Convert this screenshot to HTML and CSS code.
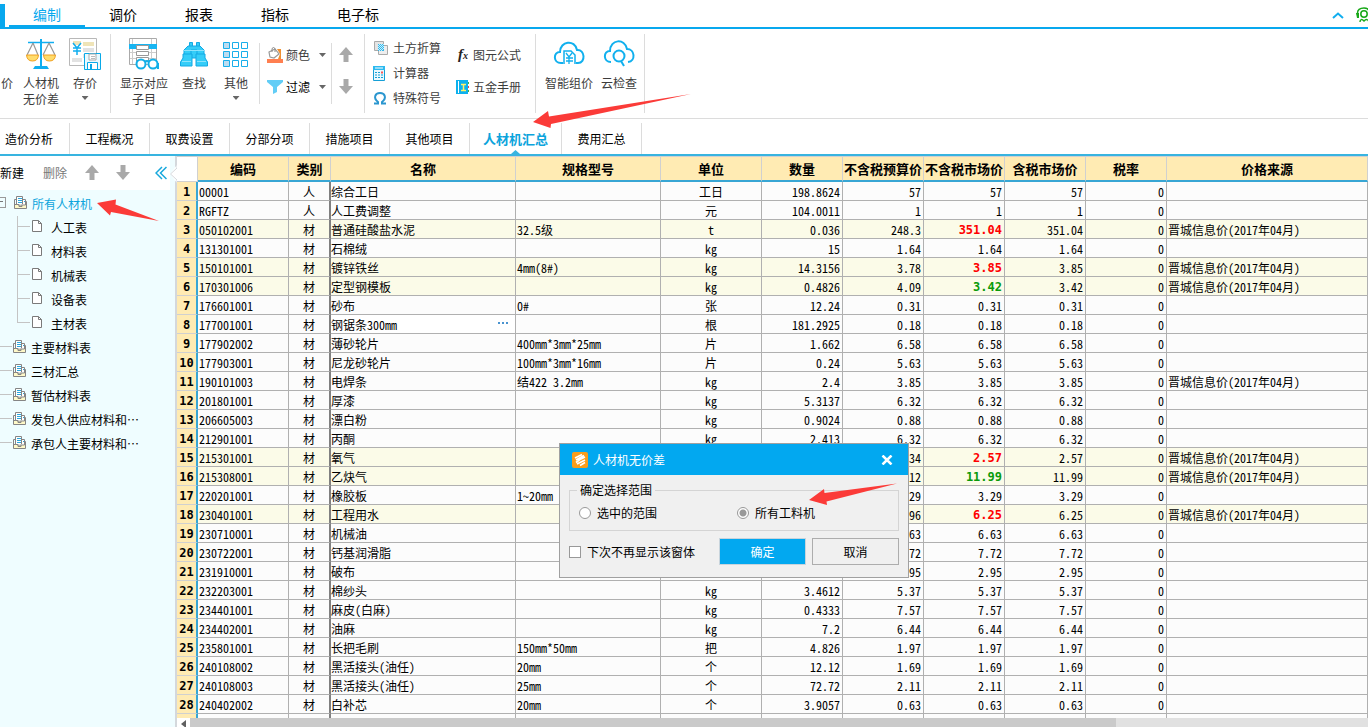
FILE: index.html
```html
<!DOCTYPE html>
<html lang="zh-CN">
<head>
<meta charset="utf-8">
<title>人材机汇总</title>
<link rel="stylesheet" href="styles.css">
</head>
<body>
<svg class="defs" width="0" height="0" aria-hidden="true">
  <symbol id="i-folder" viewBox="0 0 13 13"><path d="M.500 8.500H12.500V12.500H.500z" fill="#fff9c8" stroke="#858585"/><path d="M4.500 3.500H11.500V9H4.500z" fill="#fff" stroke="#858585"/><path d="M2.500 .500H8.500V8.500H2.500z" fill="#fff"/><path d="M.500 12V3.500H2.500V.500H8.500V8M2.500 3V8.500H5V10.500H8V8.500M11.500 5.500H12.500V12" fill="none" stroke="#858585"/><path d="M4 2.500H8M4 4.500H8M4 6.500H8M10 5.500H11" stroke="#2ba7dd"/></symbol>
  <symbol id="i-page" viewBox="0 0 11 13"><path d="M.500 .500H6.500L9.500 3.500V11.500H.500z" fill="#fff" stroke="#7a7a7a"/><path d="M6.500 .500V3.500H9.500" fill="none" stroke="#7a7a7a"/></symbol>
  <symbol id="i-up" viewBox="0 0 14 16"><path d="M7 0L14 8H9.500V15H4.500V8H0z" fill="#a9a9a9"/></symbol>
  <symbol id="i-down" viewBox="0 0 14 16"><path d="M7 15L0 7H4.500V0H9.500V7H14z" fill="#a9a9a9"/></symbol>
</svg>

<nav class="menu">
  <span class="menu-app"></span>
  <button class="menu-tab on">编制</button><button class="menu-tab">调价</button><button class="menu-tab">报表</button><button class="menu-tab">指标</button><button class="menu-tab wide">电子标</button>
  <span class="menu-right">
    <button class="bare" aria-label="收起"><svg width="12" height="7" viewBox="0 0 12 7"><path d="M1 6L6 1.500L11 6" fill="none" stroke="#12aeef" stroke-width="2"/></svg></button>
    <button class="bare" aria-label="客服"><svg width="12" height="16" viewBox="0 0 12 16"><g fill="none" stroke="#18a818" stroke-width="1.500"><path d="M2 9C0 2 5 1 8 1S13 2 13 5"/><circle cx="8" cy="7" r="3.200"/><path d="M4 15C4 12 6 12 8 14C10 12 12 12 13 15"/></g><path d="M0 6H3V11H1z" fill="#18a818"/></svg></button>
  </span>
</nav>

<header class="ribbon">
  <button class="tool cut"><span>价</span></button>
  <button class="tool"><svg width="32" height="32" viewBox="0 0 32 32"><path d="M3 4.500H29" stroke="#10aef0" stroke-width="1.500"/><path d="M16 1V28" stroke="#10aef0" stroke-width="2"/><path d="M10 28H22L24 31H8z" fill="#10aef0"/><path d="M8 5L2 17M8 5L13 17M24 5L18 17M24 5L30 17" fill="none" stroke="#999" stroke-width="1.200"/><path d="M1.500 17H13.500Q13 23 7.500 23T1.500 17M18.500 17H30.500Q30 23 24.500 23T18.500 17" fill="#ffdc6c" stroke="#f0a020"/></svg><span>人材机<br>无价差</span></button>
  <button class="tool"><svg width="32" height="32" viewBox="0 0 32 32"><path d="M.500 .500H27.500V27.500H.500z" fill="#fff" stroke="#b8b8b8"/><path d="M14 4H25V8H14M4 3H12V7H4" fill="#efe4b8"/><path d="M14 10H25V14H14M14 16H25V20H14M3 20H13V24H3" fill="#e2e2e2"/><path d="M4 5L8 10L12 5M4 10H12M4 13H12M8 10V17" fill="none" stroke="#10aef0" stroke-width="1.500"/><path d="M15.500 15.500H31.500V31.500H15.500z" fill="#e8f9ff" stroke="#08a9e8"/><path d="M18.500 31V24.500H28.500V31" fill="#fff" stroke="#08a9e8"/><path d="M22 26V31" stroke="#08a9e8" stroke-width="2"/><path d="M20 16H27V22H20z" fill="#fff" stroke="#aaa"/><path d="M22 18.500H26M22 20.500H26" stroke="#bbb"/></svg><span>存价</span><i class="caret"></i></button>
  <hr class="sep">
  <button class="tool large"><svg width="30" height="32" viewBox="0 0 30 32"><path d="M.500 .500H27.500V26.500H.500z" fill="#fff" stroke="#aaa"/><path d="M3.500 1V26M1 14.500H27M1 20.500H27M22.500 1V26" stroke="#ccc"/><path d="M0 6H28V11H0z" fill="#18b5f2"/><path d="M7.500 7.500H19.500V11.500H7.500zM7.500 13.500H19.500V17.500H7.500zM7.500 19.500H19.500V23H7.500z" fill="#fff" stroke="#999"/><g fill="#fff" stroke="#11afe8" stroke-width="2"><circle cx="12" cy="26" r="4.500"/><circle cx="24" cy="26" r="4.500"/><path d="M16 24Q18 22 20 24M29 25V31"/></g></svg><span>显示对应<br>子目</span></button>
  <button class="tool"><svg width="28" height="32" viewBox="0 0 28 32"><g fill="#35cdf8" stroke="#12a9e4"><path d="M9.500 4.500H12.500V9H9.500zM16.500 4.500H19.500V9H16.500z"/><path d="M4 12L8 8H20L24 12V17H4z"/><path d="M11 12H17V20H11z"/><path d="M3 16H12V28H.500V24L3 20zM16 16H25V20L27.500 24V28H16z"/></g><path d="M4 12.500H24M2 23.500H11M17 23.500H26" stroke="#8ce4fc"/></svg><span>查找</span></button>
  <button class="tool slim"><svg width="26" height="32" viewBox="0 0 26 32"><path d="M.500 4.500h6v6h-6zM.500 13.500h6v6h-6zM.500 22.500h6v6h-6z" fill="#bcdcf0" stroke="#18aeea"/><path d="M9.500 4.500h6v6h-6zM18.500 4.500h6v6h-6zM9.500 13.500h6v6h-6zM18.500 13.500h6v6h-6zM9.500 22.500h6v6h-6zM18.500 22.500h6v6h-6z" fill="#fff" stroke="#18aeea"/></svg><span>其他</span><i class="caret"></i></button>
  <hr class="sep short">
  <div class="stack two fmt">
    <button class="row-tool"><svg width="16" height="16" viewBox="0 0 16 16"><path d="M10 2H14V12H11L13 7z" fill="#f09030"/><path d="M2 5L8 2L12 7L7 11L3 10z" fill="#fff" stroke="#999" stroke-width="1.200"/><path d="M5 5V1.500Q6.500 -.500 8 1.500V5" fill="none" stroke="#888"/><path d="M0 12H16V16H0z" fill="#ff7f50"/></svg><span>颜色</span><i class="caret"></i></button>
    <button class="row-tool dark"><svg width="16" height="16" viewBox="0 0 16 16"><path d="M0 1H16V3L10 8V13L6 15V8L0 3z" fill="#62cdf6"/></svg><span>过滤</span><i class="caret"></i></button>
  </div>
  <hr class="sep short">
  <div class="stack two moves">
    <button class="bare" aria-label="上移"><svg width="14" height="16"><use href="#i-up"/></svg></button>
    <button class="bare" aria-label="下移"><svg width="14" height="16"><use href="#i-down"/></svg></button>
  </div>
  <hr class="sep">
  <div class="stack three">
    <button class="row-tool"><svg width="15" height="15" viewBox="0 0 15 15"><path d="M1.500 .500H10.500V9.500H1.500z" fill="#e4e4e4" stroke="#aaa"/><path d="M5.500 4.500H14.500V13.500H5.500z" fill="#eee" stroke="#aaa"/><path d="M5 3H11V10H5z" fill="#35b7e8"/><path d="M5 5L7 3M5 7L9 3M5 9L11 3M6 10L11 5M8 10L11 7" stroke="#c8f0ff"/></svg><span>土方折算</span></button>
    <button class="row-tool"><svg width="15" height="15" viewBox="0 0 15 15"><path d="M.500 .500H11.500V14.500H.500z" fill="#e9f9ff" stroke="#169fd6"/><path d="M0 0H12V4H0z" fill="#2cb9ef"/><path d="M2 2H10" stroke="#fff"/><path d="M2 6.500H4M5 6.500H7M2 9H4M5 9H7M2 11.500H4M5 11.500H7M8 9H10M8 11.500H10" stroke="#169fd6"/><path d="M8 6.500H10" stroke="#f55" stroke-width="2"/></svg><span>计算器</span></button>
    <button class="row-tool"><svg width="15" height="15" viewBox="0 0 15 15"><path d="M1 12.500H5V11C0 7 2 2 7 2S14 7 9 11V12.500H13" fill="none" stroke="#2a96cf" stroke-width="2"/></svg><span>特殊符号</span></button>
  </div>
  <div class="stack two">
    <button class="row-tool"><em class="fx">f<small>x</small></em><span>图元公式</span></button>
    <button class="row-tool"><svg width="14" height="14" viewBox="0 0 14 14"><path d="M0 0H12V14H0z" fill="#0cb1ee"/><path d="M2.500 1V13" stroke="#fff"/><path d="M5 4.500H10M5 10.500H10M7.500 4V11" stroke="#fff36a" stroke-width="1.500"/><path d="M12 2H13V4H12M12 10H13V12H12" fill="#37b24a"/><path d="M12 6H13V8H12" fill="#e44"/></svg><span>五金手册</span></button>
  </div>
  <hr class="sep">
  <button class="tool large"><svg width="32" height="32" viewBox="0 0 32 32"><g fill="none" stroke="#10b0ee" stroke-width="2"><path d="M10 25H8C0 25 0 14 7 14C7 3 22 1 24 12C32 11 33 25 25 25H23"/><path d="M11 26V13H18L22 17V26" stroke-width="1.500"/><path d="M13 15L16 19L19 15M16 19V26M13 20H20M13 23H20" stroke-width="1.300"/></g></svg><span>智能组价</span></button>
  <button class="tool"><svg width="32" height="32" viewBox="0 0 32 32"><g fill="none" stroke="#10b0ee" stroke-width="2"><path d="M8 24C0 24 0 13 7 13C7 1 22 0 24 11C32 11 33 23 25 24"/><circle cx="16" cy="18" r="5.500"/><path d="M18 23L21 28"/></g></svg><span>云检查</span></button>
  <hr class="sep">
</header>

<nav class="tabs">
  <button class="tab first">造价分析</button><button class="tab">工程概况</button><button class="tab">取费设置</button><button class="tab">分部分项</button><button class="tab">措施项目</button><button class="tab">其他项目</button><button class="tab on">人材机汇总</button><button class="tab">费用汇总</button>
</nav>

<div class="work">
  <aside class="side">
    <div class="side-bar">
      <button class="bare new">新建</button><button class="bare del">删除</button>
      <button class="bare" aria-label="上移"><svg width="14" height="16"><use href="#i-up"/></svg></button>
      <button class="bare" aria-label="下移"><svg width="14" height="16"><use href="#i-down"/></svg></button>
      <button class="bare fold" aria-label="折叠"><svg width="12" height="14" viewBox="0 0 12 14"><path d="M7 1L1 7L7 13M11.500 1L5.500 7L11.500 13" fill="none" stroke="#18a8dc" stroke-width="1.500"/></svg></button>
    </div>
    <ul class="tree">
      <li><a class="node on" href="#"><svg width="13" height="13"><use href="#i-folder"/></svg>所有人材机</a>
        <ul>
          <li><a class="node" href="#"><svg width="11" height="13"><use href="#i-page"/></svg>人工表</a></li>
          <li><a class="node" href="#"><svg width="11" height="13"><use href="#i-page"/></svg>材料表</a></li>
          <li><a class="node" href="#"><svg width="11" height="13"><use href="#i-page"/></svg>机械表</a></li>
          <li><a class="node" href="#"><svg width="11" height="13"><use href="#i-page"/></svg>设备表</a></li>
          <li><a class="node" href="#"><svg width="11" height="13"><use href="#i-page"/></svg>主材表</a></li>
        </ul>
      </li>
      <li><a class="node" href="#"><svg width="13" height="13"><use href="#i-folder"/></svg>主要材料表</a></li>
      <li><a class="node" href="#"><svg width="13" height="13"><use href="#i-folder"/></svg>三材汇总</a></li>
      <li><a class="node" href="#"><svg width="13" height="13"><use href="#i-folder"/></svg>暂估材料表</a></li>
      <li><a class="node" href="#"><svg width="13" height="13"><use href="#i-folder"/></svg>发包人供应材料和⋯</a></li>
      <li><a class="node" href="#"><svg width="13" height="13"><use href="#i-folder"/></svg>承包人主要材料和⋯</a></li>
    </ul>
    <svg class="notch" width="7" height="18" viewBox="0 0 7 18"><path d="M7 0L0 9L7 18z" fill="#fff"/><path d="M7 0V3L.500 9L7 15V18" fill="none" stroke="#d4d8dc"/></svg>
  </aside>

  <main class="grid-pane">
    <div class="grid-view">
    <table class="grid">
      <colgroup><col class="c-no"><col class="c-code"><col class="c-kind"><col class="c-name"><col class="c-spec"><col class="c-unit"><col class="c-num"><col class="c-num"><col class="c-num"><col class="c-num"><col class="c-num"><col></colgroup>
      <thead><tr><th></th><th>编码</th><th>类别</th><th>名称</th><th>规格型号</th><th>单位</th><th>数量</th><th>不含税预算价</th><th>不含税市场价</th><th>含税市场价</th><th>税率</th><th>价格来源</th></tr></thead>
      <tbody>
        <tr><th>1</th><td>00001</td><td>人</td><td>综合工日</td><td></td><td>工日</td><td>198.8624</td><td>57</td><td>57</td><td>57</td><td>0</td><td></td></tr>
        <tr><th>2</th><td>RGFTZ</td><td>人</td><td>人工费调整</td><td></td><td>元</td><td>104.0011</td><td>1</td><td>1</td><td>1</td><td>0</td><td></td></tr>
        <tr class="hit"><th>3</th><td>050102001</td><td>材</td><td>普通硅酸盐水泥</td><td>32.5级</td><td>t</td><td>0.036</td><td>248.3</td><td class="rise">351.04</td><td>351.04</td><td>0</td><td>晋城信息价(2017年04月)</td></tr>
        <tr><th>4</th><td>131301001</td><td>材</td><td>石棉绒</td><td></td><td>kg</td><td>15</td><td>1.64</td><td>1.64</td><td>1.64</td><td>0</td><td></td></tr>
        <tr class="hit"><th>5</th><td>150101001</td><td>材</td><td>镀锌铁丝</td><td>4mm(8#)</td><td>kg</td><td>14.3156</td><td>3.78</td><td class="rise">3.85</td><td>3.85</td><td>0</td><td>晋城信息价(2017年04月)</td></tr>
        <tr class="hit"><th>6</th><td>170301006</td><td>材</td><td>定型钢模板</td><td></td><td>kg</td><td>0.4826</td><td>4.09</td><td class="fall">3.42</td><td>3.42</td><td>0</td><td>晋城信息价(2017年04月)</td></tr>
        <tr><th>7</th><td>176601001</td><td>材</td><td>砂布</td><td>0#</td><td>张</td><td>12.24</td><td>0.31</td><td>0.31</td><td>0.31</td><td>0</td><td></td></tr>
        <tr><th>8</th><td>177001001</td><td>材</td><td class="current"><div class="edit">钢锯条300mm<button class="more" aria-label="更多"><i></i><i></i><i></i></button></div></td><td></td><td>根</td><td>181.2925</td><td>0.18</td><td>0.18</td><td>0.18</td><td>0</td><td></td></tr>
        <tr><th>9</th><td>177902002</td><td>材</td><td>薄砂轮片</td><td>400mm*3mm*25mm</td><td>片</td><td>1.662</td><td>6.58</td><td>6.58</td><td>6.58</td><td>0</td><td></td></tr>
        <tr><th>10</th><td>177903001</td><td>材</td><td>尼龙砂轮片</td><td>100mm*3mm*16mm</td><td>片</td><td>0.24</td><td>5.63</td><td>5.63</td><td>5.63</td><td>0</td><td></td></tr>
        <tr><th>11</th><td>190101003</td><td>材</td><td>电焊条</td><td>结422 3.2mm</td><td>kg</td><td>2.4</td><td>3.85</td><td>3.85</td><td>3.85</td><td>0</td><td>晋城信息价(2017年04月)</td></tr>
        <tr><th>12</th><td>201801001</td><td>材</td><td>厚漆</td><td></td><td>kg</td><td>5.3137</td><td>6.32</td><td>6.32</td><td>6.32</td><td>0</td><td></td></tr>
        <tr><th>13</th><td>206605003</td><td>材</td><td>漂白粉</td><td></td><td>kg</td><td>0.9024</td><td>0.88</td><td>0.88</td><td>0.88</td><td>0</td><td></td></tr>
        <tr><th>14</th><td>212901001</td><td>材</td><td>丙酮</td><td></td><td>kg</td><td>2.413</td><td>6.32</td><td>6.32</td><td>6.32</td><td>0</td><td></td></tr>
        <tr class="hit"><th>15</th><td>215301001</td><td>材</td><td>氧气</td><td></td><td></td><td></td><td>2.34</td><td class="rise">2.57</td><td>2.57</td><td>0</td><td>晋城信息价(2017年04月)</td></tr>
        <tr class="hit"><th>16</th><td>215308001</td><td>材</td><td>乙炔气</td><td></td><td></td><td></td><td>12.12</td><td class="fall">11.99</td><td>11.99</td><td>0</td><td>晋城信息价(2017年04月)</td></tr>
        <tr><th>17</th><td>220201001</td><td>材</td><td>橡胶板</td><td>1~20mm</td><td></td><td></td><td>3.29</td><td>3.29</td><td>3.29</td><td>0</td><td></td></tr>
        <tr class="hit"><th>18</th><td>230401001</td><td>材</td><td>工程用水</td><td></td><td></td><td></td><td>5.96</td><td class="rise">6.25</td><td>6.25</td><td>0</td><td>晋城信息价(2017年04月)</td></tr>
        <tr><th>19</th><td>230710001</td><td>材</td><td>机械油</td><td></td><td></td><td></td><td>6.63</td><td>6.63</td><td>6.63</td><td>0</td><td></td></tr>
        <tr><th>20</th><td>230722001</td><td>材</td><td>钙基润滑脂</td><td></td><td></td><td></td><td>7.72</td><td>7.72</td><td>7.72</td><td>0</td><td></td></tr>
        <tr><th>21</th><td>231910001</td><td>材</td><td>破布</td><td></td><td></td><td></td><td>2.95</td><td>2.95</td><td>2.95</td><td>0</td><td></td></tr>
        <tr><th>22</th><td>232203001</td><td>材</td><td>棉纱头</td><td></td><td>kg</td><td>3.4612</td><td>5.37</td><td>5.37</td><td>5.37</td><td>0</td><td></td></tr>
        <tr><th>23</th><td>234401001</td><td>材</td><td>麻皮(白麻)</td><td></td><td>kg</td><td>0.4333</td><td>7.57</td><td>7.57</td><td>7.57</td><td>0</td><td></td></tr>
        <tr><th>24</th><td>234402001</td><td>材</td><td>油麻</td><td></td><td>kg</td><td>7.2</td><td>6.44</td><td>6.44</td><td>6.44</td><td>0</td><td></td></tr>
        <tr><th>25</th><td>235801001</td><td>材</td><td>长把毛刷</td><td>150mm*50mm</td><td>把</td><td>4.826</td><td>1.97</td><td>1.97</td><td>1.97</td><td>0</td><td></td></tr>
        <tr><th>26</th><td>240108002</td><td>材</td><td>黑活接头(油任)</td><td>20mm</td><td>个</td><td>12.12</td><td>1.69</td><td>1.69</td><td>1.69</td><td>0</td><td></td></tr>
        <tr><th>27</th><td>240108003</td><td>材</td><td>黑活接头(油任)</td><td>25mm</td><td>个</td><td>72.72</td><td>2.11</td><td>2.11</td><td>2.11</td><td>0</td><td></td></tr>
        <tr><th>28</th><td>240402002</td><td>材</td><td>白补芯</td><td>20mm</td><td>个</td><td>3.9057</td><td>0.63</td><td>0.63</td><td>0.63</td><td>0</td><td></td></tr>
        <tr><th></th><td></td><td></td><td></td><td></td><td></td><td></td><td></td><td></td><td></td><td></td><td></td></tr>
      </tbody>
    </table>
    </div>
    <div class="hscroll"><button class="bare hs-left" aria-label="向左滚动"><i></i></button><span class="hs-thumb"></span><span class="hs-rest"></span></div>
  </main>
</div>

<form class="dialog" role="dialog" aria-labelledby="dlg-title">
  <div class="dlg-head">
    <svg width="16" height="16" viewBox="0 0 16 16"><rect width="16" height="16" rx="2" fill="#f99d1c"/><path d="M3 6L10 2.500M4 8L12 3.500M6 8.500L13 5M4 10.500L8 7.500M5 12L13 8M8 13.500L13 10.500" fill="none" stroke="#fff" stroke-width="1.600"/></svg>
    <span id="dlg-title">人材机无价差</span>
    <button type="button" class="bare" aria-label="关闭"><svg width="12" height="10" viewBox="0 0 12 10"><path d="M1.500 .500L10.500 9.500M10.500 .500L1.500 9.500" stroke="#fff" stroke-width="2.500"/></svg></button>
  </div>
  <div class="dlg-body">
    <fieldset>
      <legend>确定选择范围</legend>
      <label><input type="radio" name="range">选中的范围</label>
      <label><input type="radio" name="range" checked>所有工料机</label>
    </fieldset>
    <div class="dlg-foot">
      <label><input type="checkbox">下次不再显示该窗体</label>
      <button type="button" class="btn primary">确定</button>
      <button type="button" class="btn">取消</button>
    </div>
  </div>
</form>

<svg class="mark mark-tab" width="160" height="36" viewBox="0 0 160 36"><path d="M1 30L16 19L17 24.500L159 2L19 32L18.500 36z" fill="#fb3b38"/></svg>
<svg class="mark mark-tree" width="64" height="24" viewBox="0 0 64 24"><path d="M1 5L20 1.500L19.500 6.500L63 23L15 14L14 17.500z" fill="#fb3b38"/></svg>
<svg class="mark mark-dlg" width="90" height="24" viewBox="0 0 90 24"><path d="M1 18L16 7L16.500 11L89 1.500L18.500 19.500L19 23z" fill="#fb3b38"/></svg>
</body>
</html>
```
FILE: styles.css
```css
* { box-sizing: border-box; }
body {
  margin: 0;
  height: 100vh;
  overflow: hidden;
  display: flex;
  flex-direction: column;
  background: #fff;
  color: #000;
  font: 12px/16px "Noto Sans CJK SC", sans-serif;
}
button, input { font: inherit; color: inherit; margin: 0; }
button { border: 0; padding: 0; background: none; white-space: nowrap; }
svg { display: block; flex: none; }
.defs { position: absolute; }
.bare { flex: none; }

/* top menu */
.menu { display: flex; height: 29px; border-bottom: 2px solid #08a8ee; flex: none; }
.menu-app { width: 5px; margin: 4px 4px 0 0; background: #08a8ee; }
.menu-tab { width: 76px; padding-top: 2px; font-size: 14px; line-height: 20px; border-bottom: 2px solid transparent; }
.menu-tab.wide { width: 90px; }
.menu-tab.on { color: #08a8ee; border-color: #08a8ee; }
.menu-right { display: flex; align-items: center; gap: 12px; margin-left: auto; padding-top: 3px; }

/* ribbon */
.ribbon { display: flex; align-items: flex-start; height: 90px; flex: none; padding-top: 5px; border-bottom: 1px solid #dcdcdc; color: #3c3c3c; }
.tool { width: 44px; display: flex; flex-direction: column; align-items: center; padding-top: 4px; flex: none; }
.tool svg { margin-bottom: 5px; }
.tool.large { width: 56px; }
.tool.slim { width: 40px; }
.tool.cut { width: 13px; margin-right: 6px; padding-top: 41px; align-items: flex-end; }
.caret { width: 7px; height: 4px; margin-top: 5px; background: #666; clip-path: polygon(0 0, 100% 0, 50% 100%); flex: none; }
.sep { width: 1px; height: 79px; margin: 0 5px 0 3px; border: 0; background: #dcdcdc; flex: none; }
.sep.short { height: 61px; margin-top: 9px; }
.stack { display: flex; flex-direction: column; flex: none; }
.two { gap: 16px; padding-top: 13px; }
.three { gap: 9px; padding: 6px 15px 0 3px; }
.row-tool { display: flex; align-items: center; gap: 5px; height: 16px; }
.two .row-tool { gap: 3px; }
.fmt { padding-left: 2px; padding-right: 5px; }
.fmt .caret { margin: 0 0 0 6px; }
.moves { padding-left: 2px; padding-right: 11px; }
.dark { color: #000; }
.fx { width: 14px; font: italic bold 15px/16px "Liberation Serif", serif; color: #222; }
.fx small { font-size: 10px; }
.stack.two + .sep { margin-left: 14px; }
.stack.fmt + .sep, .stack.moves + .sep { margin-left: 0; }

/* page tabs */
.tabs { display: flex; height: 37px; flex: none; padding-top: 4px; border-bottom: 2px solid #38b4e0; }
.tab { width: 80px; border-right: 1px solid #dcdcdc; }
.tab.first { width: 70px; padding-right: 11px; }
.tab.on { position: relative; width: 92px; color: #0ca4dc; font-weight: bold; font-size: 13px; }
.tab.on::after { content: ""; position: absolute; left: 41px; bottom: 0; width: 9px; height: 4px; background: #38b4e0; clip-path: polygon(50% 0, 100% 100%, 0 100%); }

/* side tree */
.work { display: flex; flex: 1; min-height: 0; }
.side { position: relative; width: 177px; flex: none; background: #effdff; border-right: 2px solid #d4d8dc; }
.notch { position: absolute; top: 9px; right: -2px; }
.side-bar { display: flex; align-items: center; height: 34px; background: #fff; margin-right: 5px; }
.side-bar .new { margin-right: 19px; }
.side-bar .del { color: #777; margin-right: 18px; }
.side-bar svg { margin-right: 17px; }
.side-bar .fold { margin-left: 8px; }
.side-bar .fold svg { margin: 0; }
.tree, .tree ul { list-style: none; margin: 0; padding: 0; }
.tree { padding-top: 2px; }
.tree ul { margin-left: 17px; }
.node { display: flex; align-items: center; height: 24px; gap: 5px; color: #000; text-decoration: none; white-space: nowrap; }
.node svg { margin-bottom: 4px; }
.node.on { color: #0ca4dc; }
.tree > li > .node::before { content: ""; width: 12px; height: 1px; margin: 0 -4px 4px 0; background: #c4c4c4; }
.tree > li > .node.on::before { width: 5px; height: 9px; margin-right: 3px; border: 1px solid #999; border-left: 0; background: linear-gradient(#777, #777) 0 3px / 3px 1px no-repeat; }
.tree ul .node { gap: 8px; padding-left: 15px; background: linear-gradient(#c4c4c4, #c4c4c4) 0 0 / 1px 100% no-repeat, linear-gradient(#c4c4c4, #c4c4c4) 0 10px / 13px 1px no-repeat; }
.tree ul li:last-child .node { background-size: 1px 11px, 13px 1px; }

/* data grid */
.grid-pane { flex: 1; min-width: 0; display: flex; flex-direction: column; border-top: 1px solid #d0d0d0; }
.grid-view { flex: 1; min-height: 0; overflow: hidden; }
.grid { width: 100%; table-layout: fixed; border-collapse: separate; border-spacing: 0; line-height: 16px; font-family: "Noto Sans Mono CJK SC", "Liberation Mono", "Noto Sans CJK SC", monospace; }
.c-no { width: 21px; }
.c-code { width: 91px; }
.c-kind { width: 42px; }
.c-name { width: 185px; }
.c-spec { width: 145px; }
.c-unit { width: 101px; }
.c-num { width: 81px; }
.grid th { padding: 0; background: #ffebb3; white-space: nowrap; }
.grid thead th { height: 25px; font: bold 13px/22px "Noto Sans CJK SC", sans-serif; border-right: 1px solid #d0d0d0; border-bottom: 2px solid #38a6d4; }
.grid thead th:first-child { background: #fff; border-bottom: 1px solid #d0d0d0; }
.grid tbody th { padding-top: 2px; font: bold 12px/16px "DejaVu Sans Mono", monospace; border-right: 2px solid #38a6d4; border-bottom: 1px solid #d0d0d0; }
.grid td { height: 19px; padding: 2px 1px 0; background: #fcfcfc; border-right: 1px solid #b0b0b0; border-bottom: 1px solid #b0b0b0; white-space: nowrap; }
.grid td:nth-child(3) { text-align: center; border-right: 2px solid #808080; }
.grid td:nth-child(4) { padding-left: 0; }
.grid td:nth-child(6) { text-align: center; }
.grid td:nth-child(n+7):nth-child(-n+11) { text-align: right; padding-right: 2px; }
.grid .hit td { background: #fbfbe8; }
.grid td.current { background: #fff; }
.grid td.rise, .grid td.fall { font: bold 12px/16px "DejaVu Sans Mono", monospace; }
.grid td.rise { color: #f00; }
.grid td.fall { color: #0a9a0a; }
.edit { display: flex; justify-content: space-between; align-items: center; }
.more { display: flex; gap: 2px; padding: 0 6px 4px 0; }
.more i { width: 2px; height: 2px; background: #4a94d0; }
.hscroll { display: flex; height: 9px; background: #e1e1e1; }
.hs-left { width: 13px; background: #fff; display: flex; justify-content: center; padding-top: 2px; }
.hs-left i { width: 5px; height: 8px; background: #606060; clip-path: polygon(100% 0, 100% 100%, 0 50%); }
.hs-thumb { flex: 11; background: #cacaca; }
.hs-rest { flex: 3; }

/* dialog */
.dialog { position: absolute; left: 559px; top: 443px; width: 350px; border: 1px solid #a0a0a0; background: #f0f0f0; }
.dlg-head { display: flex; align-items: center; gap: 5px; height: 31px; padding: 0 15px 0 12px; background: #02a8f0; color: #fff; }
.dlg-head .bare { margin-left: auto; }
.dlg-body { padding: 7px 9px 12px; }
.dialog fieldset { display: flex; margin: 0; height: 49px; padding: 7px 9px 0; border: 1px solid #d4d4d4; min-width: 0; }
.dialog legend { padding: 0 3px; margin-left: -2px; }
.dialog label { display: flex; align-items: center; gap: 6px; height: 16px; white-space: nowrap; }
.dialog fieldset label:first-of-type { width: 158px; }
.dialog input { appearance: none; width: 12px; height: 12px; border: 1px solid #999; background: #fff; flex: none; }
.dialog input[type="radio"] { border-radius: 50%; }
.dialog input[type="radio"]:checked { background: radial-gradient(circle, #999 3px, #fff 4px); }
.dlg-foot { display: flex; align-items: center; gap: 6px; padding-top: 7px; }
.dlg-foot label { margin-right: auto; }
.btn { width: 87px; height: 27px; border: 1px solid #adadad; background: #f0f0f0; }
.btn.primary { background: #02a8f0; color: #fff; border-color: #c8d4dc; }

/* callout arrows */
.mark { position: absolute; pointer-events: none; }
.mark-tab { left: 532px; top: 92px; }
.mark-tree { left: 96px; top: 198px; }
.mark-dlg { left: 808px; top: 482px; }
```
